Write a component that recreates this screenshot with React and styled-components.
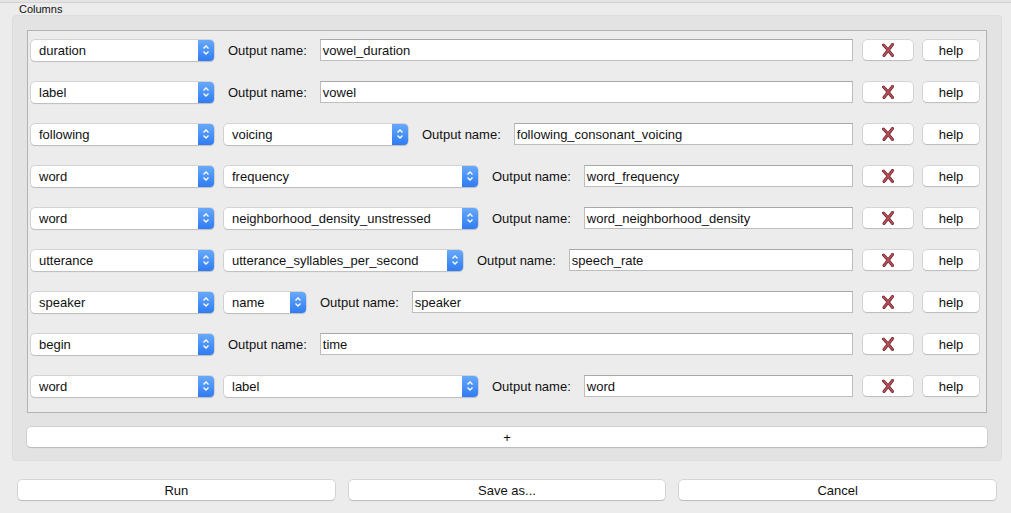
import React from "react";
import styled, { createGlobalStyle } from "styled-components";

const GlobalStyle = createGlobalStyle`
  html, body {
    margin: 0;
    padding: 0;
    background: #ececec;
    font-family: "Liberation Sans", Arial, sans-serif;
    font-size: 13px;
    color: #111;
  }
`;

const rows = [
  { col: "duration", name: "vowel_duration" },
  { col: "label", name: "vowel" },
  { col: "following", sub: "voicing", subWidth: 184, name: "following_consonant_voicing" },
  { col: "word", sub: "frequency", subWidth: 254, name: "word_frequency" },
  { col: "word", sub: "neighborhood_density_unstressed", subWidth: 254, name: "word_neighborhood_density" },
  { col: "utterance", sub: "utterance_syllables_per_second", subWidth: 239, name: "speech_rate" },
  { col: "speaker", sub: "name", subWidth: 82, name: "speaker" },
  { col: "begin", name: "time" },
  { col: "word", sub: "label", subWidth: 254, name: "word" },
];

const Page = styled.div`
  width: 1011px;
  height: 513px;
  display: flex;
  flex-direction: column;
  overflow: hidden;
`;

const TopStrip = styled.div`
  height: 2px;
  background: #e4e4e4;
  border-bottom: 1px solid #d2d2d2;
`;

const GroupTitle = styled.div`
  font-size: 11px;
  line-height: 12px;
  padding-left: 19px;
  height: 12px;
`;

const Group = styled.div`
  margin-left: 12px;
  width: 990px;
  height: 446px;
  background: #e3e3e3;
  border: 1px solid #dcdcdc;
  border-radius: 4px;
  box-sizing: border-box;
  padding: 14px 14px 0 14px;
  display: flex;
  flex-direction: column;
  gap: 14px;
`;

const Frame = styled.div`
  height: 383px;
  box-sizing: border-box;
  border: 1px solid #b3b3b3;
  background: #ececec;
  padding: 8px 7px 0 3px;
  display: flex;
  flex-direction: column;
  gap: 20px;
`;

const Row = styled.div`
  display: flex;
  align-items: center;
  height: 22px;
`;

const Combo = styled.div`
  position: relative;
  width: ${(p) => p.$width}px;
  height: 21px;
  box-sizing: border-box;
  background: #fff;
  border-radius: 4px;
  box-shadow: 0 0 0 0.5px #b9b9b9, 0 1px 1px rgba(0, 0, 0, 0.18);
  display: flex;
  align-items: center;
  padding-left: 8px;
  margin-left: ${(p) => p.$gap || 0}px;
  flex-shrink: 0;
`;

const ComboArrows = styled.div`
  position: absolute;
  right: 0;
  top: 0;
  bottom: 0;
  width: 16px;
  border-radius: 0 4px 4px 0;
  background: linear-gradient(#67a9fb, #2f7cf2);
  display: flex;
  align-items: center;
  justify-content: center;
`;

const Label = styled.span`
  margin-left: 14px;
  white-space: nowrap;
`;

const TextField = styled.div`
  flex: 1;
  margin-left: 13px;
  height: 22px;
  box-sizing: border-box;
  background: #fff;
  border: 1px solid #bdbdbd;
  border-top-color: #a8a8a8;
  display: flex;
  align-items: center;
  padding-left: 2px;
`;

const PushButton = styled.div`
  width: ${(p) => p.$width}px;
  height: 20px;
  margin-left: 10px;
  box-sizing: border-box;
  background: #fff;
  border-radius: 4px;
  box-shadow: 0 0 0 0.5px #bdbdbd, 0 1px 1px rgba(0, 0, 0, 0.2);
  display: flex;
  align-items: center;
  justify-content: center;
  flex-shrink: 0;
`;

const AddButton = styled.div`
  height: 20px;
  background: #fff;
  border-radius: 4px;
  box-shadow: 0 0 0 0.5px #bdbdbd, 0 1px 1px rgba(0, 0, 0, 0.2);
  display: flex;
  align-items: center;
  justify-content: center;
`;

const Footer = styled.div`
  display: flex;
  gap: 14px;
  padding: 19px 15px 0 18px;
`;

const FooterButton = styled.div`
  flex: 1;
  height: 20px;
  background: #fff;
  border-radius: 4px;
  box-shadow: 0 0 0 0.5px #bdbdbd, 0 1px 1px rgba(0, 0, 0, 0.2);
  display: flex;
  align-items: center;
  justify-content: center;
`;

const Chevrons = () => (
  <svg width="8" height="12" viewBox="0 0 8 12">
    <path d="M1.5 4.5 L4 2 L6.5 4.5 M1.5 7.5 L4 10 L6.5 7.5" fill="none" stroke="#fff" strokeWidth="1.3" />
  </svg>
);

const RemoveIcon = () => (
  <svg width="14" height="14" viewBox="0 0 14 14">
    <path d="M2.5 2 Q7 6.5 11.5 12.5 M11.5 1.5 Q7 7.5 3 12.5" fill="none" stroke="#6e2a30" strokeWidth="3" strokeLinecap="round" />
    <path d="M2.5 2 Q7 6.5 11.5 12.5 M11.5 1.5 Q7 7.5 3 12.5" fill="none" stroke="#b8505a" strokeWidth="1.6" strokeLinecap="round" />
  </svg>
);

const Select = ({ value, width, gap }) => (
  <Combo $width={width} $gap={gap}>
    {value}
    <ComboArrows>
      <Chevrons />
    </ComboArrows>
  </Combo>
);

export default function App() {
  return (
    <Page>
      <GlobalStyle />
      <TopStrip />
      <GroupTitle>Columns</GroupTitle>
      <Group>
        <Frame>
          {rows.map((r, i) => (
            <Row key={i}>
              <Select value={r.col} width={183} />
              {r.sub && <Select value={r.sub} width={r.subWidth} gap={10} />}
              <Label>Output name:</Label>
              <TextField>{r.name}</TextField>
              <PushButton $width={50}>
                <RemoveIcon />
              </PushButton>
              <PushButton $width={56}>help</PushButton>
            </Row>
          ))}
        </Frame>
        <AddButton>+</AddButton>
      </Group>
      <Footer>
        <FooterButton>Run</FooterButton>
        <FooterButton>Save as...</FooterButton>
        <FooterButton>Cancel</FooterButton>
      </Footer>
    </Page>
  );
}
